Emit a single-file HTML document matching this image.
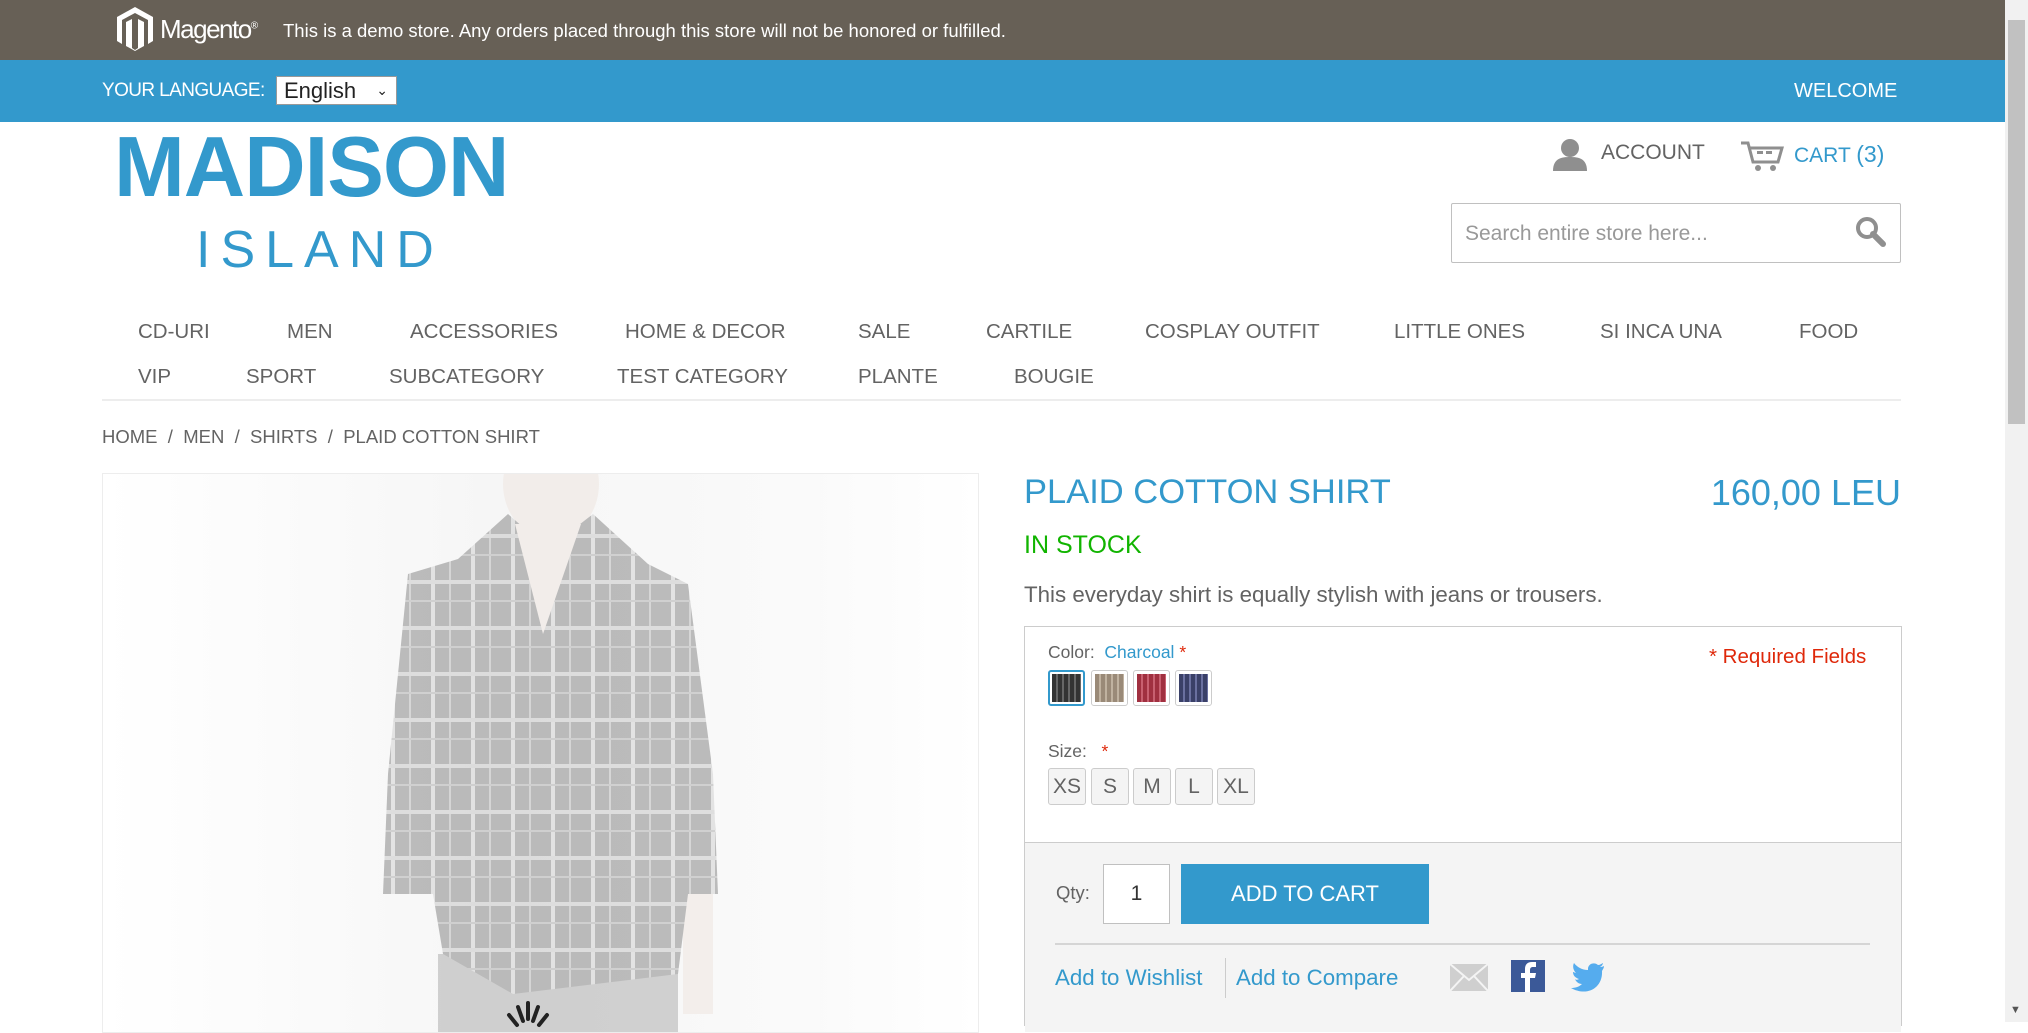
<!DOCTYPE html>
<html><head><meta charset="utf-8"><style>
*{margin:0;padding:0;box-sizing:border-box}
body{width:2028px;height:1022px;overflow:hidden;position:relative;background:#fff;font-family:"Liberation Sans",sans-serif;color:#636363}
.a{position:absolute;white-space:nowrap}
.nav{font-size:20.5px;color:#636363}
</style></head><body>
<div class="a" style="left:0;top:0;width:2005px;height:60px;background:#676056"></div>
<svg class="a" style="left:115px;top:6px" width="40" height="46" viewBox="0 0 40 46"><path d="M20 1 L38 11 V35 L33 38 V14 L20 7 L7 14 V38 L2 35 V11Z M11 16 L17 13 V42 L20 44 L23 42 V13 L29 16 V40 L20 45 L11 40Z" fill="#fff"/></svg>
<div class="a" style="left:160px;top:14px;font-size:26px;color:#fff;letter-spacing:-1.5px">Magento<sup style="font-size:10px">®</sup></div>
<div class="a" style="left:283px;top:20px;font-size:18.5px;color:#fff">This is a demo store. Any orders placed through this store will not be honored or fulfilled.</div>
<div class="a" style="left:0;top:60px;width:2005px;height:62px;background:#3399cc"></div>
<div class="a" style="left:102px;top:80px;font-size:19px;color:#fff;letter-spacing:-0.6px">YOUR LANGUAGE:</div>
<div class="a" style="left:276px;top:76px;width:121px;height:29px;background:#fff;border:1px solid #999;font-size:22px;color:#222;padding-left:7px;line-height:27px">English <span style="font-size:14px;position:absolute;right:8px;top:0">&#8964;</span></div>
<div class="a" style="left:1794px;top:80px;font-size:20px;color:#fff">WELCOME</div>
<div class="a" style="left:2005px;top:0;width:23px;height:1022px;background:#f1f1f1"></div>
<div class="a" style="left:2008px;top:20px;width:17px;height:404px;background:#c1c1c1"></div>
<div class="a" style="left:2010px;top:1004px;font-size:11px;color:#555">▼</div>

<div class="a" style="left:114px;top:123px;font-size:85px;font-weight:bold;color:#3399cc;letter-spacing:-1px;line-height:90px">MADISON</div>
<div class="a" style="left:196px;top:222px;font-size:52px;color:#3399cc;letter-spacing:10px;line-height:56px">ISLAND</div>

<svg class="a" style="left:1552px;top:138px" width="36" height="34" viewBox="0 0 36 34"><circle cx="18" cy="10" r="9" fill="#8f8f8f"/><path d="M1 33 C1 20 10 19 18 19 C26 19 35 20 35 33Z" fill="#8f8f8f"/></svg>
<div class="a" style="left:1601px;top:141px;font-size:21px;color:#636363">ACCOUNT</div>
<svg class="a" style="left:1740px;top:140px" width="44" height="32" viewBox="0 0 44 32"><path d="M1 3 H8 L13 22 H38 L42 8 H10" fill="none" stroke="#8f8f8f" stroke-width="3"/><rect x="17" y="11" width="6" height="3" fill="#8f8f8f"/><rect x="26" y="11" width="6" height="3" fill="#8f8f8f"/><circle cx="18" cy="28" r="3" fill="#8f8f8f"/><circle cx="33" cy="28" r="3" fill="#8f8f8f"/></svg>
<div class="a" style="left:1794px;top:141px;font-size:21px;color:#3399cc">CART <span style="font-size:23px">(3)</span></div>
<div class="a" style="left:1451px;top:203px;width:450px;height:60px;border:1px solid #c0c0c0;border-radius:2px"></div>
<div class="a" style="left:1465px;top:222px;font-size:21px;color:#999">Search entire store here...</div>
<svg class="a" style="left:1855px;top:216px" width="32" height="32" viewBox="0 0 32 32"><circle cx="12" cy="12" r="9" fill="none" stroke="#8f8f8f" stroke-width="4"/><path d="M18 18 L28 28" stroke="#8f8f8f" stroke-width="6" stroke-linecap="round"/></svg>

<div class="a nav" style="left:138px;top:320px">CD-URI</div>
<div class="a nav" style="left:287px;top:320px">MEN</div>
<div class="a nav" style="left:410px;top:320px">ACCESSORIES</div>
<div class="a nav" style="left:625px;top:320px">HOME &amp; DECOR</div>
<div class="a nav" style="left:858px;top:320px">SALE</div>
<div class="a nav" style="left:986px;top:320px">CARTILE</div>
<div class="a nav" style="left:1145px;top:320px">COSPLAY OUTFIT</div>
<div class="a nav" style="left:1394px;top:320px">LITTLE ONES</div>
<div class="a nav" style="left:1600px;top:320px">SI INCA UNA</div>
<div class="a nav" style="left:1799px;top:320px">FOOD</div>
<div class="a nav" style="left:138px;top:365px">VIP</div>
<div class="a nav" style="left:246px;top:365px">SPORT</div>
<div class="a nav" style="left:389px;top:365px">SUBCATEGORY</div>
<div class="a nav" style="left:617px;top:365px">TEST CATEGORY</div>
<div class="a nav" style="left:858px;top:365px">PLANTE</div>
<div class="a nav" style="left:1014px;top:365px">BOUGIE</div>
<div class="a" style="left:102px;top:399px;width:1799px;height:2px;background:#ededed"></div>
<div class="a" style="left:102px;top:426px;font-size:18.5px;color:#636363">HOME &nbsp;/ &nbsp;MEN &nbsp;/ &nbsp;SHIRTS &nbsp;/ &nbsp;PLAID COTTON SHIRT</div>

<div class="a" style="left:102px;top:473px;width:877px;height:560px;border:1px solid #ededed;overflow:hidden;background:linear-gradient(90deg,#fff 0%,#fafafa 25%,#f6f6f6 45%,#fafafa 80%,#fff 100%)">
<svg width="877" height="560" viewBox="0 0 877 560" style="opacity:.55">
<defs><pattern id="pl" width="40" height="46" patternUnits="userSpaceOnUse"><rect width="40" height="46" fill="#8a8a8a"/><rect x="8" width="4" height="46" fill="#d2d2d2"/><rect x="26" width="2" height="46" fill="#bbb"/><rect y="14" width="40" height="4" fill="#c8c8c8"/><rect y="34" width="40" height="2" fill="#b0b0b0"/></pattern></defs>
<ellipse cx="448" cy="10" rx="48" ry="55" fill="#efe6e1"/>
<rect x="385" y="420" width="30" height="120" fill="#efe6e1"/>
<rect x="580" y="420" width="30" height="120" fill="#efe6e1"/>
<rect x="335" y="480" width="240" height="90" fill="#b0b0b0"/>
<path d="M405 40 L445 75 L490 40 L545 90 L585 110 L610 300 L615 420 L585 420 L575 500 L410 520 L340 480 L330 420 L280 420 L285 300 L305 100 L355 85Z" fill="url(#pl)"/>
<path d="M412 50 L440 160 L478 50" fill="#efe6e1"/>
</svg>
<svg class="a" style="left:400px;top:525px" width="50" height="40" viewBox="0 0 50 40"><path d="M25 4 V20 M15 8 L20 22 M6 16 L14 26 M35 8 L30 22 M44 16 L36 26" stroke="#222" stroke-width="4" stroke-linecap="round"/></svg>
</div>

<div class="a" style="left:1024px;top:473px;font-size:34.5px;color:#3399cc">PLAID COTTON SHIRT</div>
<div class="a" style="left:1663px;top:472px;font-size:36px;color:#3399cc;width:238px;text-align:right">160,00 LEU</div>
<div class="a" style="left:1024px;top:531px;font-size:25px;color:#11b400">IN STOCK</div>
<div class="a" style="left:1024px;top:582px;font-size:22.3px;color:#636363">This everyday shirt is equally stylish with jeans or trousers.</div>

<div class="a" style="left:1024px;top:626px;width:878px;height:400px;border:1px solid #cccccc"></div>
<div class="a" style="left:1025px;top:842px;width:876px;height:190px;background:#f4f4f4;border-top:1px solid #ccc"></div>
<div class="a" style="left:1048px;top:642px;font-size:17.5px;color:#636363">Color: &nbsp;<span style="color:#3399cc">Charcoal</span> <span style="color:#df280a">*</span></div>
<div class="a" style="left:1709px;top:645px;font-size:20.5px;color:#df280a">* Required Fields</div>
<div class="a" style="left:1048px;top:670px;width:37px;height:36px;border:2px solid #3399cc;border-radius:3px;padding:2px"><div style="width:100%;height:100%;background:repeating-linear-gradient(90deg,#333 0 4px,#666 4px 6px)"></div></div>
<div class="a" style="left:1091px;top:670px;width:37px;height:36px;border:1px solid #ccc;border-radius:3px;padding:3px"><div style="width:100%;height:100%;background:repeating-linear-gradient(90deg,#9a8a78 0 4px,#c0b2a0 4px 6px)"></div></div>
<div class="a" style="left:1133px;top:670px;width:37px;height:36px;border:1px solid #ccc;border-radius:3px;padding:3px"><div style="width:100%;height:100%;background:repeating-linear-gradient(90deg,#a03040 0 4px,#c86070 4px 6px)"></div></div>
<div class="a" style="left:1175px;top:670px;width:37px;height:36px;border:1px solid #ccc;border-radius:3px;padding:3px"><div style="width:100%;height:100%;background:repeating-linear-gradient(90deg,#3a4068 0 4px,#6a70a0 4px 6px)"></div></div>
<div class="a" style="left:1048px;top:741px;font-size:17.5px;color:#636363">Size: &nbsp;&nbsp;<span style="color:#df280a">*</span></div>
<div class="a" style="left:1048px;top:768px;width:38px;height:37px;border:1px solid #ccc;border-radius:3px;background:#f4f4f4;font-size:21px;line-height:35px;text-align:center;color:#636363">XS</div>
<div class="a" style="left:1091px;top:768px;width:38px;height:37px;border:1px solid #ccc;border-radius:3px;background:#f4f4f4;font-size:21px;line-height:35px;text-align:center;color:#636363">S</div>
<div class="a" style="left:1133px;top:768px;width:38px;height:37px;border:1px solid #ccc;border-radius:3px;background:#f4f4f4;font-size:21px;line-height:35px;text-align:center;color:#636363">M</div>
<div class="a" style="left:1175px;top:768px;width:38px;height:37px;border:1px solid #ccc;border-radius:3px;background:#f4f4f4;font-size:21px;line-height:35px;text-align:center;color:#636363">L</div>
<div class="a" style="left:1217px;top:768px;width:38px;height:37px;border:1px solid #ccc;border-radius:3px;background:#f4f4f4;font-size:21px;line-height:35px;text-align:center;color:#636363">XL</div>

<div class="a" style="left:1056px;top:882px;font-size:18.5px;color:#636363">Qty:</div>
<div class="a" style="left:1103px;top:864px;width:67px;height:60px;border:1px solid #c0c0c0;background:#fff;font-size:21px;text-align:center;line-height:58px;color:#333">1</div>
<div class="a" style="left:1181px;top:864px;width:248px;height:60px;background:#3399cc;color:#fff;font-size:22px;text-align:center;line-height:60px">ADD TO CART</div>
<div class="a" style="left:1055px;top:943px;width:815px;height:2px;background:#d5d5d5"></div>
<div class="a" style="left:1055px;top:965px;font-size:22.3px;color:#3399cc">Add to Wishlist</div>
<div class="a" style="left:1225px;top:958px;width:1px;height:40px;background:#ccc"></div>
<div class="a" style="left:1236px;top:965px;font-size:22.3px;color:#3399cc">Add to Compare</div>
<svg class="a" style="left:1450px;top:964px" width="38" height="27" viewBox="0 0 38 27"><rect width="38" height="27" fill="#cfcfcf"/><path d="M0 0 L19 16 L38 0 M0 27 L14 12 M38 27 L24 12" stroke="#f4f4f4" stroke-width="2" fill="none"/></svg>
<svg class="a" style="left:1511px;top:960px" width="34" height="32" viewBox="0 0 34 32"><rect width="34" height="32" fill="#3b5998"/><path d="M19 32 V18 H24 L25 13 H19 V10 C19 8 20 7 22 7 H25 V2 H21 C16 2 14 5 14 9 V13 H10 V18 H14 V32Z" fill="#fff"/></svg>
<svg class="a" style="left:1571px;top:962px" width="34" height="30" viewBox="0 0 34 30"><path d="M33 4 C31 5 30 5 29 5 C31 4 32 2 32 1 C30 2 29 3 27 3 C24 0 18 1 17 6 C17 7 17 8 17 8 C11 8 6 5 3 1 C1 5 3 9 5 11 C4 11 3 10 2 10 C2 14 5 16 8 17 C6 18 5 18 4 17 C5 20 8 22 11 22 C8 25 4 26 0 26 C16 35 32 26 31 9 C32 7 33 6 33 4Z" fill="#55acee"/></svg>
</body></html>
